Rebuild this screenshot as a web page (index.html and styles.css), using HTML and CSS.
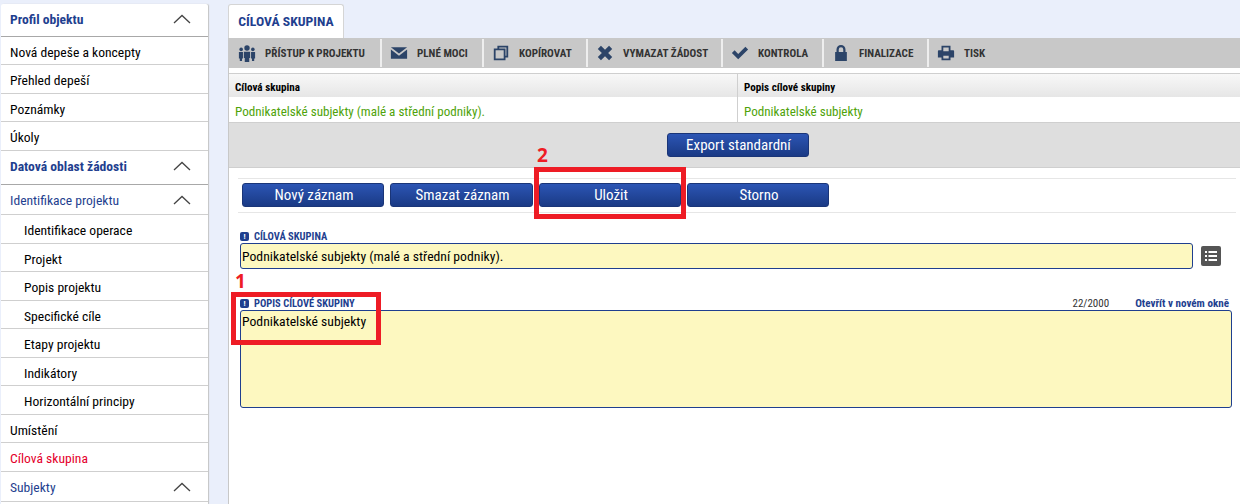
FILE: index.html
```html
<!DOCTYPE html>
<html lang="cs">
<head>
<meta charset="utf-8">
<title>Cílová skupina</title>
<link rel="stylesheet" href="styles.css">
</head>
<body>
<div class="page">
  <nav class="sidebar">
    <div class="nav-head h-first"><b>Profil objektu</b><svg class="chev" viewBox="0 0 18 10"><path d="M1 9 9 1.500 17 9"/></svg></div>
    <div class="nav-row">Nová depeše a koncepty</div>
    <div class="nav-row">Přehled depeší</div>
    <div class="nav-row">Poznámky</div>
    <div class="nav-row">Úkoly</div>
    <div class="nav-head h-second"><b>Datová oblast žádosti</b><svg class="chev" viewBox="0 0 18 10"><path d="M1 9 9 1.500 17 9"/></svg></div>
    <div class="nav-head sub"><span>Identifikace projektu</span><svg class="chev" viewBox="0 0 18 10"><path d="M1 9 9 1.500 17 9"/></svg></div>
    <div class="nav-row child">Identifikace operace</div>
    <div class="nav-row child">Projekt</div>
    <div class="nav-row child">Popis projektu</div>
    <div class="nav-row child">Specifické cíle</div>
    <div class="nav-row child">Etapy projektu</div>
    <div class="nav-row child">Indikátory</div>
    <div class="nav-row child">Horizontální principy</div>
    <div class="nav-row">Umístění</div>
    <div class="nav-row active">Cílová skupina</div>
    <div class="nav-head sub last"><span>Subjekty</span><svg class="chev" viewBox="0 0 18 10"><path d="M1 9 9 1.500 17 9"/></svg></div>
  </nav>
  <main class="main">
    <div class="tabs"><div class="tab">CÍLOVÁ SKUPINA</div></div>
    <div class="panel">
    <div class="toolbar">
      <div class="tool w1"><svg class="ico" viewBox="0 0 20 20"><circle cx="10" cy="4.500" r="3"/><circle cx="3.500" cy="6" r="2"/><circle cx="16.500" cy="6" r="2"/><path d="M6.500 8.500h7v7h-1V20h-5v-4.500h-1zM1 9h4.500v7H4.500v3H2v-3H1zM14.500 9H19v7h-1v3h-2.500v-3h-1z"/></svg>PŘÍSTUP K PROJEKTU</div>
      <div class="tool w2"><svg class="ico" viewBox="0 0 20 20"><path d="M1 3.500h18L10 10.500zM1 6l9 7 9-7v10.500H1z"/></svg>PLNÉ MOCI</div>
      <div class="tool w3"><svg class="ico" viewBox="0 0 20 20"><path fill-rule="evenodd" d="M6 2h12v13h-3v3H2V5h4zM8 4v1h7v8h1V4zM4 7v9h9V7z"/></svg>KOPÍROVAT</div>
      <div class="tool w4"><svg class="ico" viewBox="0 0 20 20"><path d="M5.500 2 10 6.500 14.500 2 18 5.500 13.500 10l4.500 4.500-3.500 3.500L10 13.500 5.500 18 2 14.500 6.500 10 2 5.500z"/></svg>VYMAZAT ŽÁDOST</div>
      <div class="tool w5"><svg class="ico" viewBox="0 0 20 20"><path d="M1 10l3-3 4 4 8-8 3 3-11 11z"/></svg>KONTROLA</div>
      <div class="tool w6"><svg class="ico" viewBox="0 0 20 20"><path fill-rule="evenodd" d="M10 1a5 5 0 0 1 5 5v3h1.500v10h-13V9H5V6a5 5 0 0 1 5-5zM7.500 6v3h5V6a2.500 2.500 0 0 0-5 0z"/></svg>FINALIZACE</div>
      <div class="tool w7"><svg class="ico" viewBox="0 0 20 20"><path fill-rule="evenodd" d="M5 2h10v5h3a1 1 0 0 1 1 1v7h-4v3H5v-3H1V8a1 1 0 0 1 1-1h3zM7 4v4h6V4zM7 13v3h6v-3z"/></svg>TISK</div>
    </div>
    <div class="grid">
      <div class="g-head">Cílová skupina</div>
      <div class="g-head">Popis cílové skupiny</div>
      <div class="g-cell">Podnikatelské subjekty (malé a střední podniky).</div>
      <div class="g-cell">Podnikatelské subjekty</div>
    </div>
    <div class="export"><button class="btn b-export">Export standardní</button></div>
    <div class="form">
      <div class="actions">
        <button class="btn b-act">Nový záznam</button>
        <button class="btn b-act wide">Smazat záznam</button>
        <button class="btn b-act">Uložit</button>
        <button class="btn b-act">Storno</button>
      </div>
      <div class="label l1"><i class="req">!</i>CÍLOVÁ SKUPINA</div>
      <div class="field-row">
        <div class="input">Podnikatelské subjekty (malé a střední podniky).</div>
        <div class="list-btn"><svg viewBox="0 0 14 12"><path d="M1 1h2v2H1zM4.500 1h8.500v2H4.500zM1 5h2v2H1zM4.500 5h8.500v2H4.500zM1 9h2v2H1zM4.500 9h8.500v2H4.500z"/></svg></div>
      </div>
      <div class="label-row">
        <div class="label"><i class="req">!</i>POPIS CÍLOVÉ SKUPINY</div>
        <div class="count">22/2000</div>
        <div class="open">Otevřít v novém okně</div>
      </div>
      <div class="textarea">Podnikatelské subjekty</div>
    </div>
    </div>
  </main>
</div>
<div class="mark m1"></div><div class="num n1">1</div>
<div class="mark m2"></div><div class="num n2">2</div>
</body>
</html>
```
FILE: styles.css
```css
* { box-sizing: border-box; }
html, body { margin: 0; height: 504px; overflow: hidden; }
body { background: #eaeffb; font-family: Roboto, "Liberation Sans", sans-serif; font-stretch: 85%; color: #000; position: relative; }
.page { display: flex; padding-left: 1px; height: 504px; }
.sidebar { width: 207px; margin-top: 4px; background: #fff; font-size: 13.600px; flex: none; box-shadow: 1px 0 1px #c4c4c4; border-radius: 2px 2px 0 0; }
.nav-row { height: 28.500px; line-height: 30px; padding-left: 9px; border-bottom: 1px solid #cfcfcf; }
.nav-row.child { padding-left: 23px; }
.nav-row.active { color: #e4002b; }
.nav-head { height: 34px; padding: 0 17px 2px 9px; display: flex; justify-content: space-between; align-items: center; color: #1f3f8f; border-bottom: 1px solid #a8a8a8; }
.nav-head.h-first { height: 32.500px; }
.nav-head.h-second { height: 34.500px; }
.nav-head.sub { height: 30px; border-bottom-color: #cfcfcf; padding-bottom: 0; }
.nav-head.last { padding-top: 2px; }
.chev { width: 18px; height: 10px; fill: none; stroke: #444; stroke-width: 1.300; }
.main { margin-left: 20px; width: 1012px; flex: none; }
.tabs { height: 38px; padding-top: 4px; }
.tab { width: 116px; height: 34px; background: #fff; border: 1px solid #d5d5d5; border-bottom: 0; border-radius: 3px 3px 0 0; color: #1f3f8f; font-weight: 700; font-size: 13.700px; line-height: 33px; text-align: center; }
.panel { background: #fff; border-left: 1px solid #c8c8c8; height: 466px; }
.toolbar { display: flex; height: 30px; background: #c8c8c8; padding-top: 1px; }
.tool { display: flex; align-items: center; height: 28px; border-right: 2px solid #eee; font-size: 11.100px; font-weight: 700; color: #333; padding-left: 8px; gap: 9px; flex: none; }
.ico { width: 18px; height: 18px; fill: #2c4468; flex: none; }
.w1 { width: 153px; padding-left: 9px; } .w2 { width: 102px; } .w3 { width: 104px; } .w4 { width: 135px; } .w5 { width: 101px; } .w6 { width: 105px; } .w7 { border: 0; }
.grid { display: grid; grid-template-columns: 508px 1fr; margin-top: 5px; border-top: 1px solid #cfcfcf; border-bottom: 1px solid #cfcfcf; }
.g-head { height: 23px; background: linear-gradient(#f8f8f8, #e6e6e6); font-size: 11.100px; font-weight: 700; line-height: 27px; padding-left: 6px; }
.g-cell { height: 25px; font-size: 13.100px; color: #4fa30a; line-height: 29px; padding-left: 6px; }
.g-head:nth-child(2), .g-cell:nth-child(4) { border-left: 1px solid #cfcfcf; }
.export { height: 45px; background: #dedede; border-bottom: 1px solid #cfcfcf; display: flex; justify-content: center; padding: 10px 0 0 6px; }
.btn { font: inherit; font-size: 15px; color: #fff; border: 1px solid #1a3578; border-radius: 3px; background: linear-gradient(#2c55b4, #1a3a85); padding: 0 0 0 2px; }
.b-export { width: 142px; height: 24px; line-height: 20px; }
.form { height: 298px; padding: 10px 8px 0 11px; }
.actions { display: flex; gap: 6px; height: 35px; padding: 4px 0 0 4px; margin: 0 -4px 0 -2px; border-top: 1px solid #e6e6e6; border-bottom: 1px solid #e6e6e6; }
.b-act { width: 142px; height: 24px; }
.b-act.wide { width: 143px; }
.label { font-size: 10.500px; font-weight: 700; color: #1f3f8f; display: flex; align-items: center; gap: 5px; }
.l1 { margin-top: 17px; height: 12px; }
.req { width: 9px; height: 9px; background: #1f3f8f; color: #fff; border-radius: 2px; font-size: 8px; line-height: 9px; font-style: normal; text-align: center; }
.field-row { display: flex; align-items: center; gap: 8px; margin-top: 1px; }
.input { width: 953px; height: 26px; background: #fdf8c0; border: 1px solid #1f3f8f; border-radius: 3px; font-size: 13.700px; line-height: 25px; padding-left: 1px; }
.list-btn { width: 20px; height: 20px; background: #555; border-radius: 2px; display: flex; align-items: center; justify-content: center; }
.list-btn svg { width: 14px; height: 12px; fill: #fff; }
.label-row { display: flex; align-items: center; height: 14px; margin-top: 27px; padding-right: 3px; }
.label-row .label { flex: 1; }
.count { font-size: 11px; color: #333; margin-right: 26px; }
.open { font-size: 11.100px; font-weight: 700; color: #1f3f8f; }
.textarea { height: 98px; background: #fdf8c0; border: 1px solid #1f3f8f; border-radius: 3px; font-size: 13.700px; line-height: 20px; padding-left: 1px; }
.mark { position: absolute; border: 5px solid #ee1c25; }
.m1 { left: 231px; top: 292px; width: 150px; height: 53px; }
.m2 { left: 534px; top: 167px; width: 152px; height: 52px; }
.num { position: absolute; color: #ee1c25; font-family: "Open Sans", sans-serif; font-stretch: 100%; font-weight: 700; font-size: 19px; line-height: 20px; }
.n1 { left: 235px; top: 271px; }
.n2 { left: 537px; top: 145px; }
```
